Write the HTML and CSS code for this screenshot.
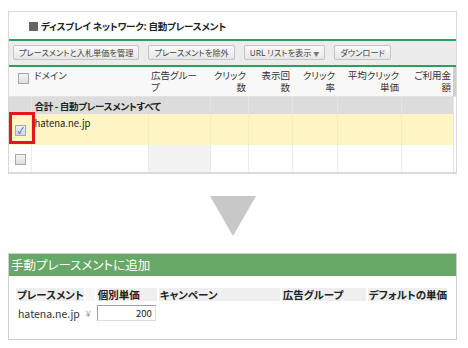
FILE: index.html
```html
<!DOCTYPE html>
<html lang="ja">
<head>
  <meta charset="UTF-8">
  <title>自動プレースメント</title>
  <link rel="stylesheet" href="styles.css">
</head>
<body>

  <!-- Placement report -->
  <div class="report">
    <h2 class="report-title"><span class="title-mark"></span>ディスプレイ ネットワーク: 自動プレースメント</h2>
    <div class="toolbar">
      <button class="tool-button">プレースメントと入札単価を管理</button>
      <button class="tool-button">プレースメントを除外</button>
      <button class="tool-button">URL リストを表示 <span class="caret">▼</span></button>
      <button class="tool-button">ダウンロード</button>
    </div>
    <table class="grid">
      <colgroup>
        <col class="c-check"><col class="c-domain"><col class="c-group"><col class="c-click">
        <col class="c-imp"><col class="c-ctr"><col class="c-cpc"><col class="c-cost"><col class="c-scroll">
      </colgroup>
      <thead>
        <tr>
          <th><span class="box"></span></th>
          <th class="left">ドメイン</th>
          <th class="left">広告グルー<br>プ</th>
          <th>クリック<br>数</th>
          <th>表示回<br>数</th>
          <th>クリック<br>率</th>
          <th>平均クリック<br>単価</th>
          <th>ご利用金<br>額</th>
          <th class="scroll"></th>
        </tr>
      </thead>
      <tbody>
        <tr class="total">
          <td></td>
          <td class="total-label" colspan="2">合計 - 自動プレースメントすべて</td>
          <td></td><td></td><td></td><td></td><td></td><td class="blank"></td>
        </tr>
        <tr class="selected">
          <td class="check-cell"><span class="box checked">✓</span><span class="highlight"></span></td>
          <td class="domain">hatena.ne.jp</td>
          <td></td><td></td><td></td><td></td><td></td><td></td><td class="blank"></td>
        </tr>
        <tr class="empty">
          <td class="check-cell"><span class="box"></span></td>
          <td></td>
          <td class="shade"></td><td></td><td></td><td></td><td></td><td></td><td class="blank"></td>
        </tr>
      </tbody>
    </table>
  </div>

  <div class="arrow"></div>

  <!-- Manual placement form -->
  <div class="manual">
    <h2 class="manual-title">手動プレースメントに追加</h2>
    <table class="manual-table">
      <colgroup>
        <col class="m-place"><col class="m-yen"><col class="m-bid"><col class="m-camp"><col class="m-group"><col class="m-default">
      </colgroup>
      <tr>
        <th>プレースメント</th>
        <th class="gap"></th>
        <th>個別単価</th>
        <th>キャンペーン</th>
        <th>広告グループ</th>
        <th>デフォルトの単価</th>
      </tr>
      <tr>
        <td class="place">hatena.ne.jp</td>
        <td class="yen">¥</td>
        <td><input class="bid" type="text" value="200"></td>
        <td></td><td></td><td></td>
      </tr>
    </table>
  </div>

</body>
</html>
```

FILE: styles.css
```css
/* General page */
body {
  margin: 0;
  background-color: #fff;
  font-family: "Noto Sans CJK JP", "Liberation Sans", sans-serif;
  font-feature-settings: "palt";
  color: #222;
}

/* Report panel */
.report {
  width: 447px;
  margin: 11px 0 0 8px;
  border: 1px solid #d8d8d8;
}

.report-title {
  display: flex;
  align-items: center;
  height: 26px;
  margin: 0;
  padding: 1px 0 0 20px;
  font-size: 9.5px;
  font-weight: bold;
  letter-spacing: -0.2px;
  color: #222;
  border-bottom: 2px solid #2f9d5d;
}

.title-mark {
  width: 9px;
  height: 9px;
  margin-right: 3px;
  background-color: #666;
}

/* Toolbar */
.toolbar {
  display: flex;
  gap: 9px;
  padding: 4px 4px 5px;
  background-color: #ececec;
  border-bottom: 2px solid #2f9d5d;
}

.tool-button {
  height: 15px;
  padding: 0 5px;
  font-family: inherit;
  font-feature-settings: "palt";
  font-size: 8.2px;
  line-height: 13px;
  color: #444;
  background: linear-gradient(#fbfbfb, #e6e6e6);
  border: 1px solid #c4c4c4;
  border-radius: 2px;
}

.caret {
  font-size: 6px;
  color: #777;
}

/* Report grid */
.grid {
  width: 100%;
  border-collapse: collapse;
  table-layout: fixed;
  font-size: 9.5px;
}

.c-check { width: 22px; }
.c-domain { width: 117px; }
.c-group { width: 62px; }
.c-click { width: 38px; }
.c-imp { width: 44px; }
.c-ctr { width: 45px; }
.c-cpc { width: 64px; }
.c-cost { width: 52px; }
.c-scroll { width: 3px; }

.grid th {
  height: 27px;
  padding: 2px 2px 0 1px;
  vertical-align: top;
  text-align: right;
  font-weight: normal;
  line-height: 12px;
  white-space: nowrap;
  color: #333;
  background-color: #f8f8f8;
  border-bottom: 1px solid #e2e2e2;
}

.grid th.left {
  padding-left: 3px;
  text-align: left;
}

.grid th.scroll {
  padding: 0;
  background-color: #cfcfcf;
}

.grid td {
  padding: 0 3px;
  border-left: 1px solid #ebebeb;
}

.grid td:first-child {
  border-left: none;
}

.grid td.blank {
  background-color: #fff;
  border-left: 1px solid #e6e6e6;
}

.total td {
  height: 17px;
  background-color: #dcdcdc;
  border-left-color: #e4e4e4;
}

.total-label {
  font-weight: bold;
  letter-spacing: -0.3px;
  color: #222;
}

.selected td {
  height: 29px;
  vertical-align: top;
  background-color: #fff5c4;
  border-left-color: #f5ecbc;
}

.domain {
  padding-top: 2px !important;
  color: #222;
}

.empty td {
  height: 27px;
  background-color: #fff;
  border-bottom: 1px solid #dcdcdc;
}

.empty td.shade {
  background-color: #f2f2f2;
}

.check-cell {
  position: relative;
  vertical-align: middle !important;
}

/* Checkboxes */
.box {
  display: inline-block;
  width: 9px;
  height: 9px;
  margin: 4px 0 0 3px;
  border: 1px solid #a8a8a8;
  background: linear-gradient(#f4f4f4, #dedede);
  vertical-align: top;
}

.check-cell .box {
  margin-top: 0;
  vertical-align: middle;
}

.box.checked {
  font-size: 9px;
  line-height: 9px;
  text-align: center;
  color: #2a4fb8;
  background: linear-gradient(#e9eefc, #cdd6ef);
}

.highlight {
  position: absolute;
  left: 0;
  top: -2px;
  width: 20px;
  height: 26px;
  border: 3px solid #e8141b;
}

/* Arrow between panels */
.arrow {
  width: 0;
  height: 0;
  margin: 22px 0 0 210px;
  border-left: 23px solid transparent;
  border-right: 23px solid transparent;
  border-top: 40px solid #c8c8c8;
}

/* Manual placement panel */
.manual {
  width: 447px;
  height: 85px;
  margin: 17px 0 0 8px;
  border: 1px solid #cfcfcf;
}

.manual-title {
  height: 22px;
  margin: 0;
  padding-left: 2px;
  font-size: 12.5px;
  font-weight: normal;
  line-height: 22px;
  color: #fff;
  background-color: #67a866;
}

.manual-table {
  margin: 12px 0 0 5px;
  border-collapse: separate;
  border-spacing: 2px 0;
  table-layout: fixed;
  font-size: 10.5px;
}

.m-place { width: 66px; }
.m-yen { width: 9px; }
.m-bid { width: 60px; }
.m-camp { width: 121px; }
.m-group { width: 84px; }
.m-default { width: 79px; }

.manual-table th {
  height: 13px;
  padding: 0 0 0 1px;
  text-align: left;
  font-weight: bold;
  line-height: 13px;
  white-space: nowrap;
  color: #222;
  background-color: #efefef;
}

.manual-table th.gap {
  background-color: #f6f6f6;
}

.manual-table td {
  height: 20px;
  padding: 0;
  padding-top: 2px;
}

.place {
  padding-left: 2px !important;
  color: #333;
}

.yen {
  color: #999;
  font-size: 9px;
}

.bid {
  box-sizing: border-box;
  width: 59px;
  height: 16px;
  padding: 0 3px;
  font-family: inherit;
  font-size: 9.5px;
  text-align: right;
  color: #222;
  border: 1px solid #a0a0a0;
  border-right-color: #ddd;
  border-bottom-color: #ddd;
}
```
